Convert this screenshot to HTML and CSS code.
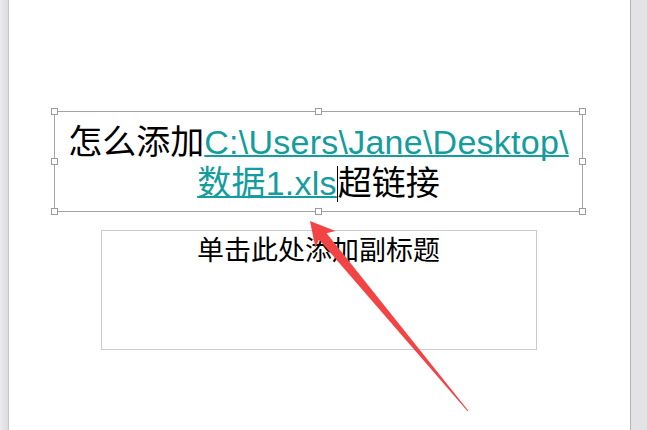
FILE: index.html
```html
<!DOCTYPE html>
<html lang="zh-CN">
<head>
    <meta charset="UTF-8">
    <meta name="viewport" content="width=device-width, initial-scale=1.0">
    <title>添加超链接</title>
    <link rel="stylesheet" href="styles.css">
</head>
<body>
    <div class="window">
        <div class="gutter gutter-left"></div>

        <div class="slide">
            <div class="title-box">
                <span class="handle h-tl"></span>
                <span class="handle h-tc"></span>
                <span class="handle h-tr"></span>
                <span class="handle h-ml"></span>
                <span class="handle h-mr"></span>
                <span class="handle h-bl"></span>
                <span class="handle h-bc"></span>
                <span class="handle h-br"></span>
                <p class="title">怎么添加<a class="link">C:\Users\Jane\Desktop\<br>数据1.xls</a><span class="caret"></span>超链接</p>
            </div>

            <div class="subtitle-box">
                <p class="subtitle">单击此处添加副标题</p>
            </div>
        </div>

        <div class="gutter gutter-right"></div>

        <!-- red pointer arrow drawn over the slide -->
        <svg class="arrow" width="647" height="430" viewBox="0 0 647 430">
            <polygon fill="#f24444" points="310,221 335.4,231.1 326.6,233.2 468.4,410.7 467.6,411.3 319,239.6 315.4,247.7"/>
        </svg>
    </div>
</body>
</html>
```

FILE: styles.css
```css
* {
    box-sizing: border-box;
}

body {
    margin: 0;
    font-family: "Liberation Sans", "Noto Sans CJK SC", sans-serif;
    background: #fff;
    overflow: hidden;
}

.window {
    position: relative;
    display: flex;
    width: 647px;
    height: 430px;
}

.gutter {
    height: 100%;
}

.gutter-left {
    width: 9px;
    background: linear-gradient(to right, #ececee, #dcdce0);
    border-right: 1px solid #c6c6ca;
}

.gutter-right {
    width: 17px;
    background: #e3e3e6;
    border-left: 1px solid #b4b4b8;
}

.slide {
    flex: 1;
    background: #fff;
    padding-top: 111px;
}

/* Title placeholder (selected) */
.title-box {
    position: relative;
    width: 529px;
    height: 101px;
    margin: 0 auto;
    padding: 10px 0 0;
    border: 1px solid #a2a2aa;
    transform: translateX(-1px);
}

.handle {
    position: absolute;
    width: 7px;
    height: 7px;
    background: #fff;
    border: 1px solid #9a9aa4;
}

.h-tl { left: -4px; top: -4px; }
.h-tc { left: 260px; top: -4px; }
.h-tr { right: -4px; top: -4px; }
.h-ml { left: -4px; top: 46px; }
.h-mr { right: -4px; top: 46px; }
.h-bl { left: -4px; bottom: -4px; }
.h-bc { left: 260px; bottom: -4px; }
.h-br { right: -4px; bottom: -4px; }

.title {
    margin: 0;
    font-size: 34px;
    line-height: 41px;
    text-align: center;
    color: #000;
}

.link {
    color: #149c9e;
    letter-spacing: 0.25px;
    text-decoration: underline;
    text-decoration-thickness: 2px;
    text-decoration-skip-ink: none;
}

.caret {
    display: inline-block;
    width: 0;
    height: 36px;
    border-left: 1px solid #000;
    vertical-align: -7px;
}

/* Subtitle placeholder */
.subtitle-box {
    width: 436px;
    height: 120px;
    margin: 18px auto 0;
    padding-top: 7px;
    border: 1px solid #cbcbcb;
    transform: translateX(-1px);
}

.subtitle {
    margin: 0;
    font-size: 27px;
    line-height: 27px;
    text-align: center;
    color: #000;
}

.arrow {
    position: absolute;
    left: 0;
    top: 0;
    pointer-events: none;
}
```
